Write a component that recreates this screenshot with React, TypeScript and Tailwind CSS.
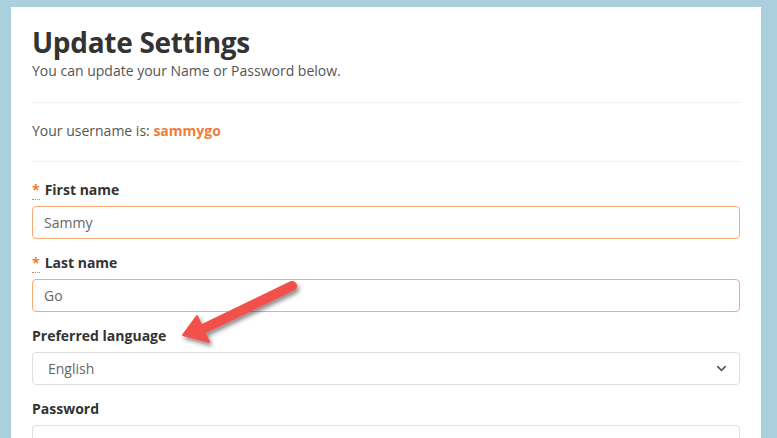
import { ChevronDown } from "lucide-react";

function Req() {
  return (
    <abbr title="required" className="mr-[5px] text-[#f07c3a] no-underline border-b border-dotted border-[#f07c3a]">
      *
    </abbr>
  );
}

function Field({ label, required, value, select, last }: { label: string; required?: boolean; value?: string; select?: boolean; last?: boolean }) {
  const border = required ? "border-[#f8aa72]" : "border-[#dedede]";
  return (
    <div className={last ? "" : "mb-[14px]"}>
      <label className="block text-[14px] leading-[20px] font-bold text-[#333]">
        {required && <Req />}
        {label}
      </label>
      <div className={`mt-[6px] flex h-[33px] items-center justify-between rounded-[4px] border bg-white ${border} ${select ? "pl-[15px] pr-[10px]" : "px-[11px]"}`}>
        <span className="text-[14px] text-[#666]">{value}</span>
        {select && <ChevronDown size={15} strokeWidth={2.5} className="text-[#555]" />}
      </div>
    </div>
  );
}

export default function App() {
  return (
    <div className="relative h-[438px] w-[777px] overflow-hidden bg-[#a9d0dc] pl-[11px] pt-[7px]" style={{ fontFamily: '"Open Sans", "Liberation Sans", sans-serif' }}>
      <div className="h-full w-[750px] bg-white px-[21px] pt-[18px]">
        <h1 className="text-[28px] leading-[34px] font-bold text-[#333] tracking-[-0.3px]">Update Settings</h1>
        <p className="mt-[2px] text-[14px] leading-[20px] text-[#555]">You can update your Name or Password below.</p>
        <div className="mt-[21px] h-px bg-[#f1f1f1]" />
        <p className="mt-[18px] text-[14px] leading-[20px] text-[#555]">
          Your username is: <span className="font-bold text-[#f07c3a]">sammygo</span>
        </p>
        <div className="mt-[20px] mb-[18px] h-px bg-[#f1f1f1]" />
        <Field label="First name" required value="Sammy" />
        <Field label="Last name" required value="Go" />
        <Field label="Preferred language" value="English" select />
        <Field label="Password" last />
      </div>
      <svg className="absolute left-0 top-0" width="777" height="438" viewBox="0 0 777 438">
        <defs>
          <filter id="sh" x="-20%" y="-20%" width="140%" height="140%">
            <feDropShadow dx="2" dy="3" stdDeviation="2" floodColor="#000" floodOpacity="0.45" />
          </filter>
        </defs>
        <g filter="url(#sh)" fill="#f2514c" stroke="#f2514c">
          <line x1="292" y1="286" x2="203" y2="329" strokeWidth="10" strokeLinecap="round" />
          <polygon points="183,335 197,316 209,342" strokeWidth="2" strokeLinejoin="round" />
        </g>
      </svg>
    </div>
  );
}
